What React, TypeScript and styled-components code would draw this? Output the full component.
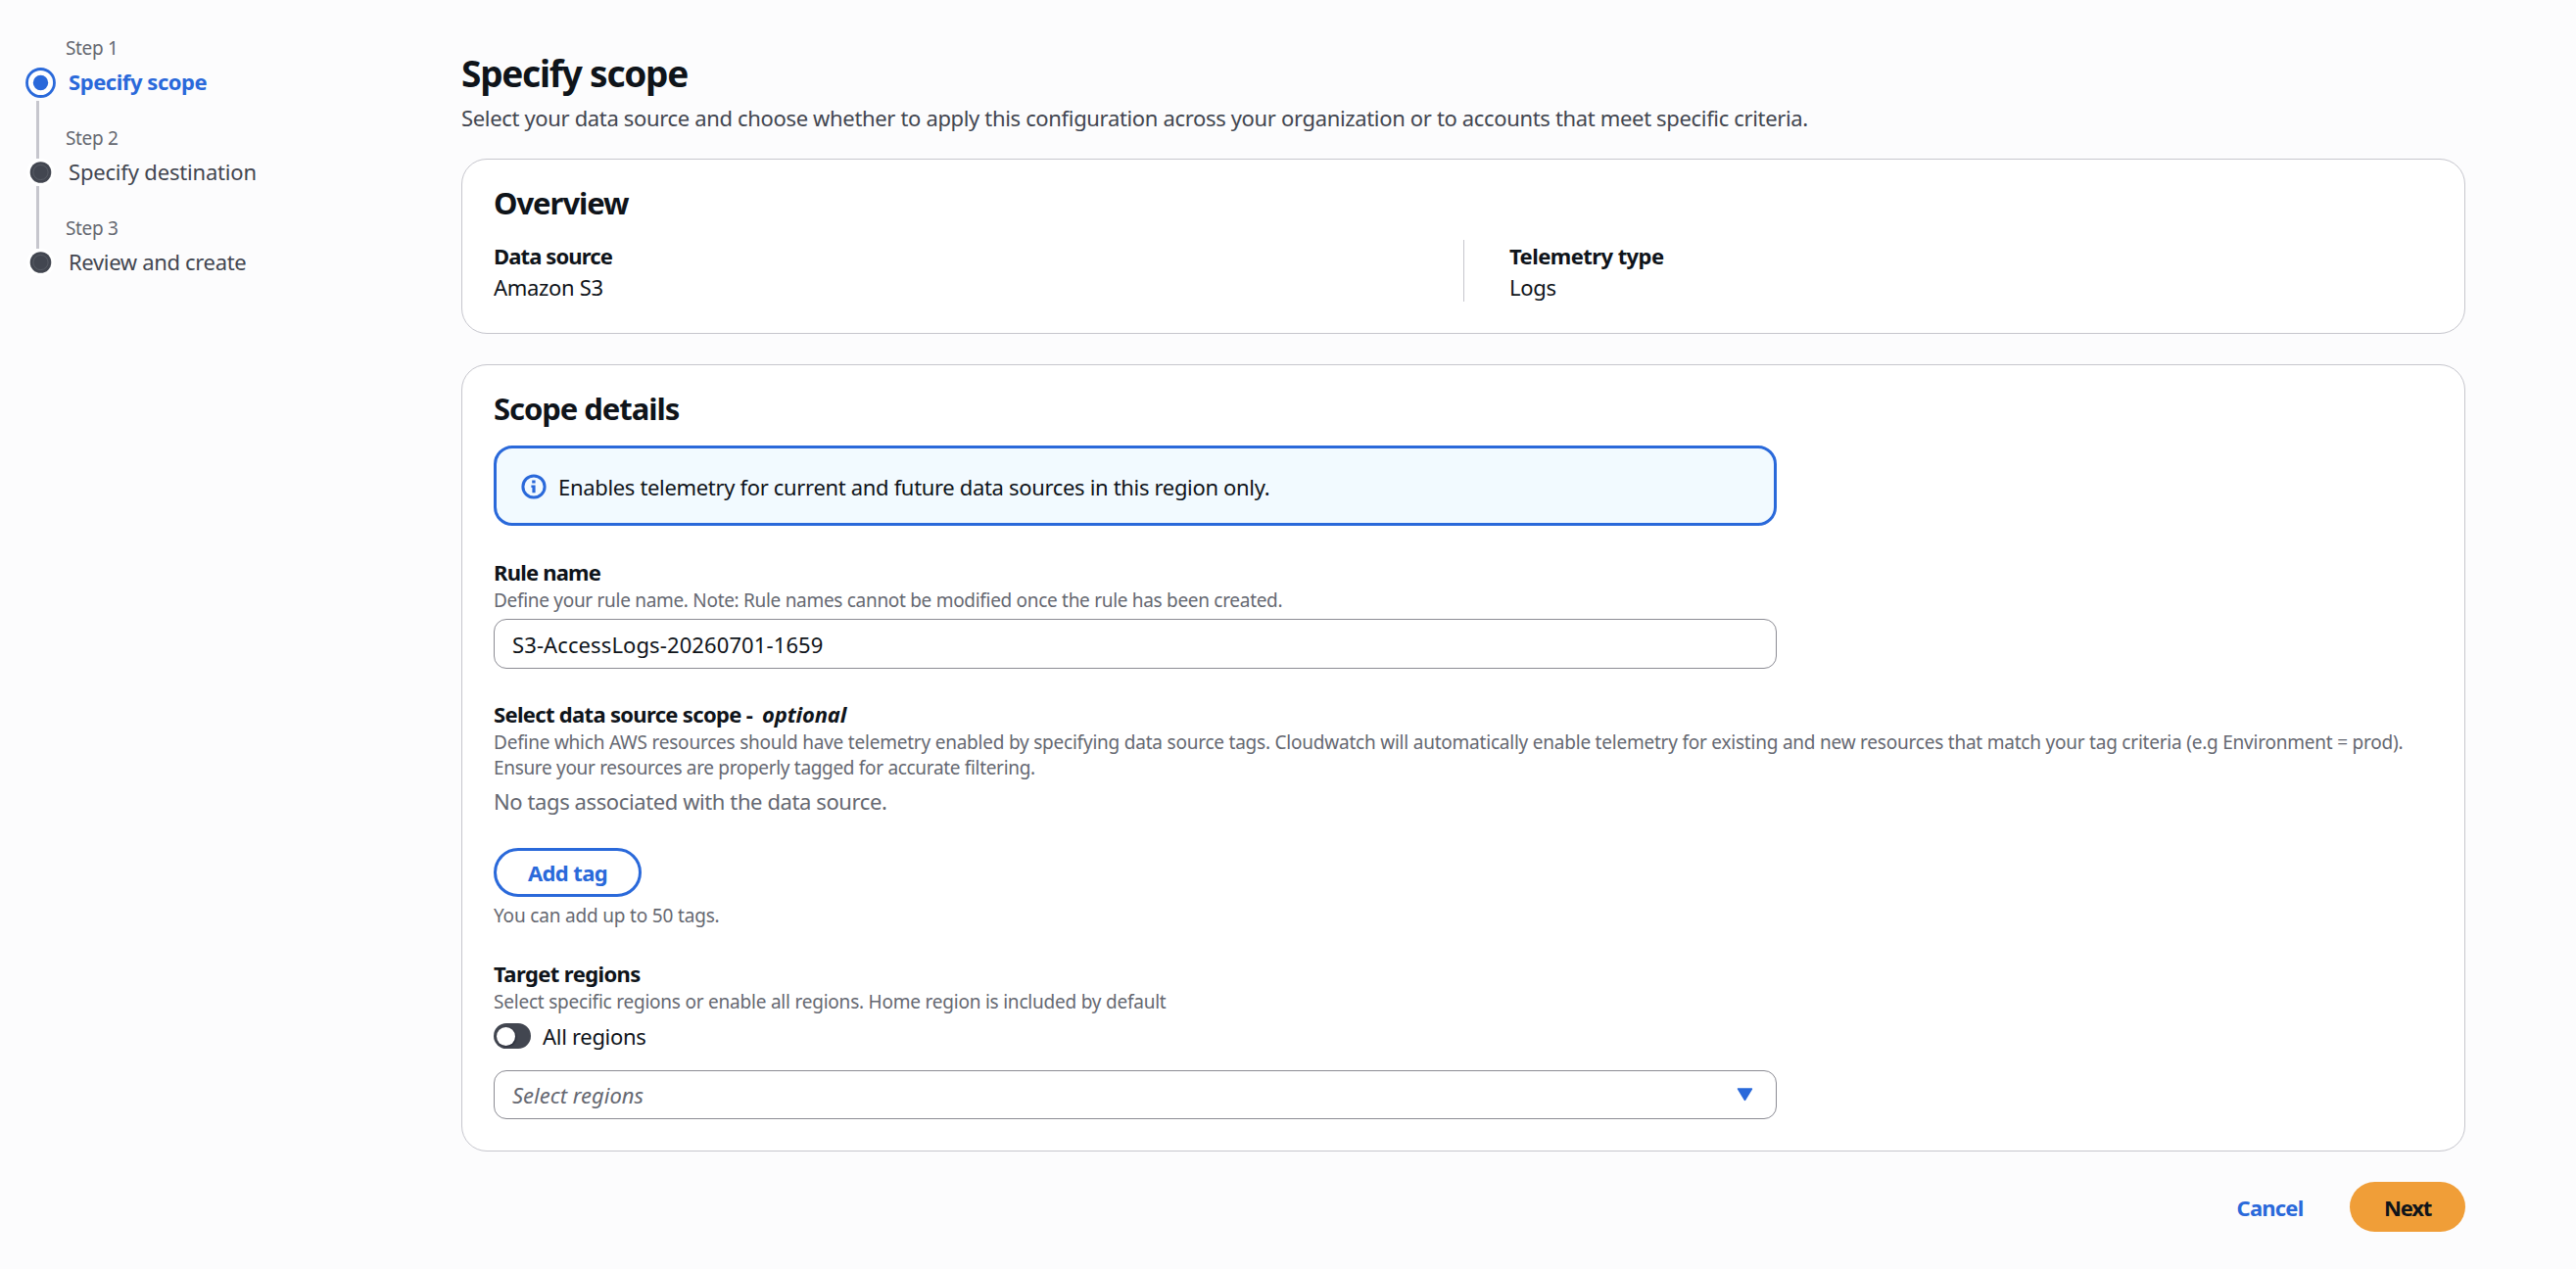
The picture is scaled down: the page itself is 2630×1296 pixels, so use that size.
import React, { useState } from 'react';
import styled, { createGlobalStyle } from 'styled-components';

const GlobalStyle = createGlobalStyle`
  * {
    box-sizing: border-box;
  }

  body {
    margin: 0;
    background: #fcfcfd;
    color: #0f141a;
    font-family: 'Noto Sans', 'Open Sans', sans-serif;
    font-size: 22px;
    line-height: 32px;
  }
`;

interface TextProps {
  $track?: number;
}

const Page = styled.div`
  display: flex;
  min-height: 1296px;
`;

const Steps = styled.nav`
  display: flex;
  flex-direction: column;
  width: 471px;
  padding: 36.6px 0 0 26px;
`;

const StepItem = styled.div<{ $height: number }>`
  display: flex;
  gap: 10px;
  height: ${({ $height }) => $height}px;
`;

const Marker = styled.div`
  display: flex;
  flex-direction: column;
  align-items: center;
  justify-content: flex-end;
  width: 31px;

  svg {
    display: block;
    flex: none;
  }
`;

const Connector = styled.div`
  flex: 1;
  width: 3px;
  margin: 0 6px 0 0;
  background: #c6c6cd;
`;

const StepText = styled.div`
  display: flex;
  flex-direction: column;
  justify-content: flex-end;
  padding-bottom: 1.5px;
`;

const StepNumber = styled.div`
  margin-bottom: 7px;
  color: #656871;
  font-size: 19px;
  line-height: 26px;
  letter-spacing: -0.35px;
`;

const StepTitle = styled.div<TextProps & { $active: boolean }>`
  padding-left: 3px;
  margin-bottom: ${({ $active }) => ($active ? 4 : 0)}px;
  color: ${({ $active }) => ($active ? '#2a69da' : '#424650')};
  font-weight: ${({ $active }) => ($active ? 700 : 400)};
  line-height: 28px;
  letter-spacing: ${({ $track = 0 }) => $track}px;
`;

const Main = styled.main`
  display: flex;
  flex-direction: column;
  width: 2046px;
  padding-top: 51px;
`;

const PageTitle = styled.h1`
  margin: 0 0 5px;
  font-size: 37px;
  line-height: 48px;
  letter-spacing: -1.25px;
`;

const PageDescription = styled.p`
  margin: 0 0 26px;
  color: #424650;
  letter-spacing: -0.34px;
`;

const Card = styled.section<{ $height: number }>`
  height: ${({ $height }) => $height}px;
  margin-bottom: 31px;
  padding: 25px 32px 0;
  border: 1px solid #c6c6cd;
  border-radius: 26px;
  background: #fff;
`;

const CardTitle = styled.h2`
  margin: 0 0 19px;
  font-size: 31px;
  line-height: 38px;
  letter-spacing: -1.05px;
`;

const Columns = styled.div`
  display: grid;
  grid-template-columns: 990px 1fr;
`;

const Column = styled.div<{ $divided?: boolean }>`
  height: 63px;
  padding-left: ${({ $divided }) => ($divided ? 46 : 0)}px;
  border-left: ${({ $divided }) => ($divided ? '1px solid #c6c6cd' : 'none')};
`;

const Label = styled.div<TextProps>`
  font-weight: 700;
  letter-spacing: ${({ $track = -0.7 }) => $track}px;
`;

const Value = styled.div`
  letter-spacing: -0.3px;
`;

const Alert = styled.div`
  display: flex;
  align-items: center;
  gap: 12px;
  width: 1310px;
  height: 82px;
  margin-bottom: 33px;
  padding: 1px 25px 0;
  border: 3px solid #2a69da;
  border-radius: 19px;
  background: #f2faff;
  letter-spacing: -0.33px;
`;

const Field = styled.div`
  margin-bottom: 32px;
`;

const FieldLabel = styled(Label)`
  margin-bottom: 2px;
  line-height: 28px;
`;

const Optional = styled.em`
  margin-left: 5px;
  letter-spacing: -0.16px;
`;

const Hint = styled.div<TextProps>`
  color: #656871;
  font-size: 19px;
  line-height: 26px;
  letter-spacing: ${({ $track = -0.3 }) => $track}px;
`;

const Input = styled.input`
  display: block;
  width: 1310px;
  height: 51px;
  margin-top: 6px;
  padding: 0 18px;
  border: 1px solid #8c8c94;
  border-radius: 13px;
  background: #fff;
  color: #0f141a;
  font: inherit;
  letter-spacing: 0.11px;
`;

const EmptyText = styled.p`
  margin: 5px 0 32px;
  color: #656871;
  letter-spacing: -0.4px;
`;

const Button = styled.button<TextProps & { $variant: 'normal' | 'primary' | 'link'; $width: number }>`
  width: ${({ $width }) => $width}px;
  height: ${({ $variant }) => ($variant === 'normal' ? 50 : 51)}px;
  padding: 0;
  border: ${({ $variant }) => ($variant === 'normal' ? '3px solid #2a69da' : 'none')};
  border-radius: 26px;
  background: ${({ $variant }) => ($variant === 'primary' ? '#f09e38' : 'transparent')};
  color: ${({ $variant }) => ($variant === 'primary' ? '#0f141a' : '#2a69da')};
  font: inherit;
  font-weight: 700;
  letter-spacing: ${({ $track = 0 }) => $track}px;
  cursor: pointer;
`;

const TagLimit = styled(Hint)`
  margin-top: 6px;
`;

const ToggleRow = styled.label`
  display: flex;
  align-items: center;
  gap: 12px;
  margin: 6px 0 19px;
  letter-spacing: -0.3px;
`;

const Switch = styled.span<{ $on: boolean }>`
  display: flex;
  align-items: center;
  justify-content: ${({ $on }) => ($on ? 'flex-end' : 'flex-start')};
  width: 38px;
  height: 26px;
  padding: 0 3px;
  border-radius: 13px;
  background: ${({ $on }) => ($on ? '#2a69da' : '#424650')};
`;

const Knob = styled.span`
  width: 19px;
  height: 19px;
  border-radius: 50%;
  background: #fff;
  box-shadow: 1px 1px 2px rgba(0, 7, 22, 0.45);
`;

const Select = styled.div`
  display: flex;
  align-items: center;
  justify-content: space-between;
  width: 1310px;
  height: 50px;
  padding: 0 23px 0 18px;
  border: 1px solid #8c8c94;
  border-radius: 13px;
  background: #fff;
`;

const Placeholder = styled.span`
  color: #656871;
  font-style: italic;
`;

const Footer = styled.footer`
  display: flex;
  justify-content: flex-end;
  gap: 12px;
`;

const ActiveDot = () => (
  <svg width="31" height="37" viewBox="0 0 31 37">
    <circle cx="15.5" cy="18.5" r="14" fill="#fff" stroke="#2a69da" strokeWidth="2.8" />
    <circle cx="15.5" cy="18.5" r="7.7" fill="#2a69da" />
  </svg>
);

const StepDot = () => (
  <svg width="31" height="28" viewBox="0 0 31 28">
    <circle cx="15.5" cy="14" r="14" fill="#fff" />
    <circle cx="15.5" cy="14" r="10.8" fill="#424650" />
    <circle cx="15.5" cy="14" r="7.6" fill="none" stroke="#6d7078" strokeWidth="0.5" />
  </svg>
);

const InfoIcon = () => (
  <svg width="26" height="26" viewBox="0 0 26 26">
    <circle cx="13" cy="13" r="11.1" fill="none" stroke="#2a69da" strokeWidth="3" />
    <path d="M11.2 6.4h3.4v3.2h-3.4zM10.4 11.5h4.2v7.8h-3.2v-5.4h-1z" fill="#2a69da" />
  </svg>
);

const CaretIcon = () => (
  <svg width="17" height="14" viewBox="0 0 17 14">
    <path d="M1.6 1h13.8L8.5 12.4z" fill="#2a69da" stroke="#2a69da" strokeWidth="1.6" strokeLinejoin="round" />
  </svg>
);

const steps = [
  { title: 'Specify scope', height: 66, track: -0.45 },
  { title: 'Specify destination', height: 87.5, track: -0.18 },
  { title: 'Review and create', height: 92, track: -0.33 },
];

const App: React.FC = () => {
  const [ruleName, setRuleName] = useState('S3-AccessLogs-20260701-1659');
  const [allRegions, setAllRegions] = useState(false);

  return (
    <Page>
      <GlobalStyle />
      <Steps>
        {steps.map((step, index) => (
          <StepItem key={step.title} $height={step.height}>
            <Marker>
              {index > 0 && <Connector />}
              {index === 0 ? <ActiveDot /> : <StepDot />}
            </Marker>
            <StepText>
              <StepNumber>Step {index + 1}</StepNumber>
              <StepTitle $active={index === 0} $track={step.track}>{step.title}</StepTitle>
            </StepText>
          </StepItem>
        ))}
      </Steps>

      <Main>
        <PageTitle>Specify scope</PageTitle>
        <PageDescription>
          Select your data source and choose whether to apply this configuration across your organization or to accounts that meet specific criteria.
        </PageDescription>

        <Card $height={179}>
          <CardTitle>Overview</CardTitle>
          <Columns>
            <Column>
              <Label $track={-0.88}>Data source</Label>
              <Value>Amazon S3</Value>
            </Column>
            <Column $divided>
              <Label $track={-0.56}>Telemetry type</Label>
              <Value>Logs</Value>
            </Column>
          </Columns>
        </Card>

        <Card $height={804}>
          <CardTitle>Scope details</CardTitle>
          <Alert>
            <InfoIcon />
            <span>Enables telemetry for current and future data sources in this region only.</span>
          </Alert>

          <Field>
            <FieldLabel $track={-0.8}>Rule name</FieldLabel>
            <Hint>Define your rule name. Note: Rule names cannot be modified once the rule has been created.</Hint>
            <Input value={ruleName} onChange={(e) => setRuleName(e.target.value)} />
          </Field>

          <Field>
            <FieldLabel $track={-0.68}>
              Select data source scope - <Optional>optional</Optional>
            </FieldLabel>
            <Hint $track={-0.22}>
              Define which AWS resources should have telemetry enabled by specifying data source tags. Cloudwatch will automatically enable telemetry for existing and new resources that match your tag criteria (e.g Environment = prod).
            </Hint>
            <Hint $track={-0.32}>Ensure your resources are properly tagged for accurate filtering.</Hint>
            <EmptyText>No tags associated with the data source.</EmptyText>
            <Button $variant="normal" $width={151} $track={-0.63}>Add tag</Button>
            <TagLimit $track={-0.18}>You can add up to 50 tags.</TagLimit>
          </Field>

          <Field>
            <FieldLabel $track={-0.6}>Target regions</FieldLabel>
            <Hint $track={-0.22}>Select specific regions or enable all regions. Home region is included by default</Hint>
            <ToggleRow onClick={() => setAllRegions(!allRegions)}>
              <Switch $on={allRegions}>
                <Knob />
              </Switch>
              All regions
            </ToggleRow>
            <Select>
              <Placeholder>Select regions</Placeholder>
              <CaretIcon />
            </Select>
          </Field>
        </Card>

        <Footer>
          <Button $variant="link" $width={139} $track={-0.8}>Cancel</Button>
          <Button $variant="primary" $width={118} $track={-1.2}>Next</Button>
        </Footer>
      </Main>
    </Page>
  );
};

export default App;
